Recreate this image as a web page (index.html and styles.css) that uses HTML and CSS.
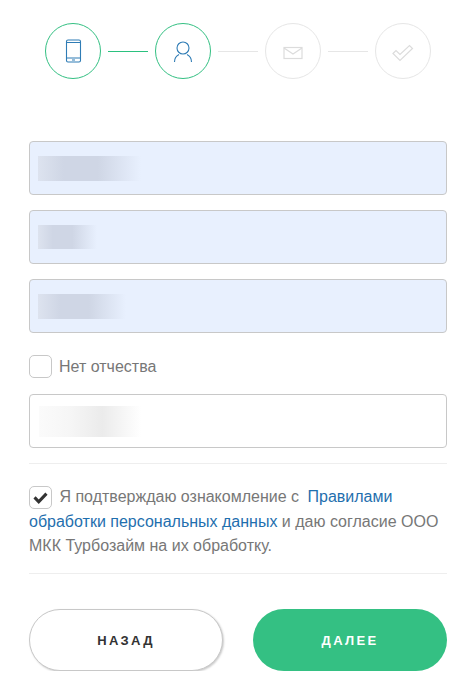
FILE: index.html
```html
<!DOCTYPE html>
<html lang="en">
<head>
    <meta charset="UTF-8">
    <title>Турбозайм</title>
    <link rel="stylesheet" href="styles.css">
</head>
<body>
    <div class="steps">
        <div class="step done">
            <svg width="18" height="24" viewBox="0 0 18 24" fill="none" stroke="#2f7cb5" stroke-width="1.1">
                <rect x="2.5" y="1" width="14" height="22" rx="1.5"/>
                <path d="M2.5 3.5h14M2.5 19h14M8 21h3"/>
            </svg>
        </div>
        <div class="line done"></div>
        <div class="step done">
            <svg width="20" height="22" viewBox="0 0 20 22" fill="none" stroke="#2f7cb5" stroke-width="1.1">
                <circle cx="10" cy="8" r="6"/>
                <path d="M1.5 22c0-4 2.500-6.500 4.500-7.500M18.500 22c0-4-2.500-6.500-4.500-7.500"/>
            </svg>
        </div>
        <div class="line"></div>
        <div class="step">
            <svg class="low" width="20" height="14" viewBox="0 0 20 14" fill="none" stroke="#dcdcdc" stroke-width="1.2">
                <rect x="1" y="1.500" width="18" height="11"/>
                <path d="M1 2l9 6 9-6"/>
            </svg>
        </div>
        <div class="line"></div>
        <div class="step">
            <svg class="low" width="22" height="18" viewBox="0 0 22 18" fill="none" stroke="#dcdcdc" stroke-width="1.2">
                <path d="M1 9.500l3-3 4 4L17.500 1.500l3 3L8 16.500z"/>
            </svg>
        </div>
    </div>

    <form class="form">
        <div class="field filled"><div class="mask"><div class="smear"></div></div></div>
        <div class="field filled"><div class="mask short"><div class="smear"></div></div></div>
        <div class="field filled"><div class="mask mid"><div class="smear"></div></div></div>

        <label class="check-row no-patronymic">
            <span class="box"></span>
            <span>Нет отчества</span>
        </label>

        <div class="field"><div class="mask plain"><div class="smear"></div></div></div>

        <div class="consent">
            <span class="box checked">
                <svg width="15" height="12" viewBox="0 0 17 13" fill="#333" preserveAspectRatio="none">
                    <path d="M0.500 7l2.500-2.500 3.500 3.500L14 0.500l2.500 2.500-10 10z"/>
                </svg>
            </span>
            Я подтверждаю ознакомление с <a href="#">Правилами обработки персональных данных</a> и даю согласие ООО МКК Турбозайм на их обработку.
        </div>

        <div class="buttons">
            <button type="button" class="btn back">НАЗАД</button>
            <button type="button" class="btn next">ДАЛЕЕ</button>
        </div>
    </form>
</body>
</html>
```

FILE: styles.css
```css
body { margin: 0; background: #fff; font-family: "Liberation Sans", Arial, sans-serif; font-size: 16px; color: #777; }

.steps { display: flex; align-items: center; gap: 7px; padding: 23px 0 0 45px; }
.step { width: 54px; height: 54px; border: 1px solid #e6e6e6; border-radius: 50%; display: flex; align-items: center; justify-content: center; }
.step.done { border-color: #34c083; }
.step .low { margin-top: 4px; }
.line { width: 40px; height: 1px; background: #e6e6e6; }
.line.done { background: #2bc17f; }

.form { margin: 62px 29px 0 29px; }
.field { height: 52px; border: 1px solid #c8c8c8; border-radius: 4px; margin-bottom: 15px; display: flex; align-items: center; padding-left: 8px; }
.field.filled { background: #e8f0fe; }
.mask { width: 103px; height: 25px; }
.mask.short { width: 59px; height: 24px; }
.mask.mid { width: 88px; }
.mask.plain { width: 102px; height: 31px; margin-left: 1px; }
.smear { height: 100%; background: linear-gradient(90deg, #dde3ef, #cfd6e5 25%, #cfd6e5 58%, #e8f0fe 100%); }
.plain .smear { background: linear-gradient(90deg, #fbfbfb, #f6f6f6 30%, #ebebeb 62%, #fff 100%); }

.box { width: 21px; height: 21px; flex: none; border: 1px solid #c8c8c8; border-radius: 5px; background: #fff; display: inline-flex; align-items: center; justify-content: center; }
.check-row { display: flex; align-items: center; gap: 7px; height: 23px; margin: 22px 0 16px 0; }

.consent { border-top: 1px solid #eee; border-bottom: 1px solid #eee; padding: 21px 0 14.500px 0; margin-top: 15px; line-height: 24.500px; }
.box.checked { vertical-align: top; margin: 1px 3px 0 0; }
.consent a { color: #1f6fae; text-decoration: none; margin-left: 4px; }

.buttons { display: flex; justify-content: space-between; margin-top: 35px; }
.btn { width: 194px; height: 62px; border-radius: 31px; font-family: inherit; font-size: 13px; font-weight: bold; letter-spacing: 2.300px; }
.back { background: #fff; border: 1px solid #c8c8c8; box-shadow: 1px 1px 2px #ccc; color: #333; }
.next { background: #34c083; border: 0; color: #fff; }
```
